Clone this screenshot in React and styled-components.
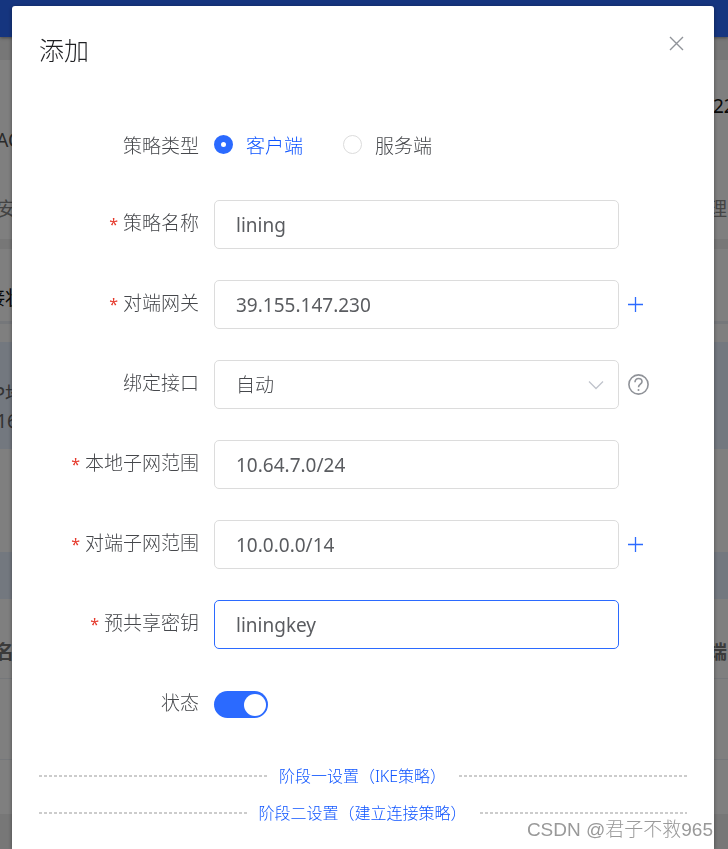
import React, { useState } from "react";
import styled, { createGlobalStyle } from "styled-components";

const phases = ["阶段一设置（IKE策略）", "阶段二设置（建立连接策略）"];

const App = () => {
  const [type, setType] = useState("client");
  const [active, setActive] = useState("psk");
  const [enabled, setEnabled] = useState(true);
  const [values, setValues] = useState({
    name: "lining",
    gateway: "39.155.147.230",
    iface: "auto",
    local: "10.64.7.0/24",
    remote: "10.0.0.0/14",
    psk: "liningkey",
  });

  const textRow = (id, label, canAdd) => (
    <Row>
      <Label htmlFor={id} $required>{label}</Label>
      <TextInput
        id={id}
        type="text"
        value={values[id]}
        $active={active === id}
        onFocus={() => setActive(id)}
        onChange={(e) => setValues({ ...values, [id]: e.target.value })}
      />
      {canAdd && (
        <IconButton type="button" aria-label={"添加" + label}>
          <svg width="15" height="15" viewBox="0 0 15 15">
            <path d="M7.5 0v15M0 7.5h15" stroke="#2b6aff" strokeWidth="1.3" />
          </svg>
        </IconButton>
      )}
    </Row>
  );

  return (
    <>
      <GlobalStyle />
      <Page>
        <TopBar />
        <Summary>
          <PageRow $height={62} $top={30} $color="#111">
            <Left />
            <Right $width={15}>22</Right>
          </PageRow>
          <PageRow $height={36} $color="#555">
            <Left $width={20}>AC</Left>
          </PageRow>
          <PageRow $height={81} $top={19} $color="#888">
            <Left $width={16}>安</Left>
            <Right>理</Right>
          </PageRow>
        </Summary>
        <Panel>
          <PageRow $height={75} $top={24} $color="#111" $line={3}>
            <Left $width={24}>接状</Left>
          </PageRow>
          <Notice>
            <Left $width={24}>P地</Left>
            <Left $width={18}>16</Left>
          </Notice>
          <Toolbar />
          <PageRow $height={80} $top={24} $color="#777" $bold $line={1}>
            <Left $width={14}>名</Left>
            <Right>端</Right>
          </PageRow>
          <PageRow $height={81} $line={1} />
          <PageRow $height={54} />
        </Panel>
      </Page>

      <Overlay>
        <Dialog role="dialog" aria-labelledby="dialog-title">
          <Header>
            <Title id="dialog-title">添加</Title>
            <CloseButton type="button" aria-label="关闭">
              <svg width="15" height="15" viewBox="0 0 15 15">
                <path d="M1 1l13 13M14 1L1 14" stroke="#909399" strokeWidth="1.4" />
              </svg>
            </CloseButton>
          </Header>

          <Form onSubmit={(e) => e.preventDefault()}>
            <Row>
              <RowTitle id="type-label">策略类型</RowTitle>
              <RadioGroup role="radiogroup" aria-labelledby="type-label">
                <RadioLabel $checked={type === "client"}>
                  <Radio name="type" checked={type === "client"} onChange={() => setType("client")} />
                  客户端
                </RadioLabel>
                <RadioLabel $checked={type === "server"}>
                  <Radio name="type" checked={type === "server"} onChange={() => setType("server")} />
                  服务端
                </RadioLabel>
              </RadioGroup>
            </Row>
            {textRow("name", "策略名称")}
            {textRow("gateway", "对端网关", true)}
            <Row>
              <Label htmlFor="iface">绑定接口</Label>
              <SelectBox>
                <Select
                  id="iface"
                  value={values.iface}
                  onChange={(e) => setValues({ ...values, iface: e.target.value })}
                >
                  <option value="auto">自动</option>
                </Select>
                <svg width="16" height="10" viewBox="0 0 16 10">
                  <path d="M1 1.5l7 7 7-7" fill="none" stroke="#c0c4cc" strokeWidth="1.3" />
                </svg>
              </SelectBox>
              <IconButton type="button" aria-label="帮助">
                <svg width="21" height="21" viewBox="0 0 21 21" fill="none" stroke="#909399" strokeWidth="1.6">
                  <circle cx="10.5" cy="10.5" r="9.6" />
                  <path d="M7 8.2C7 5.9 8.5 4.5 10.5 4.5s3.5 1.3 3.5 3.2c0 2.3-3.5 2.8-3.5 5.6" />
                  <circle cx="10.5" cy="16" r="1" fill="#909399" stroke="none" />
                </svg>
              </IconButton>
            </Row>
            {textRow("local", "本地子网范围")}
            {textRow("remote", "对端子网范围", true)}
            {textRow("psk", "预共享密钥")}
            <Row>
              <Label htmlFor="enabled">状态</Label>
              <Switch id="enabled" checked={enabled} onChange={(e) => setEnabled(e.target.checked)} />
            </Row>
          </Form>

          {phases.map((phase) => (
            <Divider key={phase}>
              <DividerButton type="button">{phase}</DividerButton>
            </Divider>
          ))}
        </Dialog>
      </Overlay>
      <Watermark>CSDN @君子不救965</Watermark>
    </>
  );
};

const GlobalStyle = createGlobalStyle`
  * {
    box-sizing: border-box;
  }

  body {
    margin: 0;
    font-family: "Noto Sans", "Noto Sans CJK SC", sans-serif;
    font-size: 19px;
    font-weight: 300;
    color: #46484c;
  }

  button, input, select {
    font: inherit;
    margin: 0;
  }
`;

/* Page behind the dialog */
const Page = styled.div`
  height: 100vh;
  overflow: hidden;
  background: #eee;
  font-weight: 400;
`;

const TopBar = styled.header`
  height: 37px;
  background: #2b6aff;
  box-shadow: 0 1px 3px rgba(0, 0, 0, 0.4);
`;

const Summary = styled.section`
  margin-top: 23px;
  background: #fff;
`;

const Panel = styled.section`
  margin-top: 10px;
  background: #fff;
`;

const PageRow = styled.div`
  display: flex;
  justify-content: space-between;
  align-items: center;
  height: ${({ $height }) => $height}px;
  padding-top: ${({ $top = 0 }) => $top}px;
  color: ${({ $color }) => $color};
  font-weight: ${({ $bold }) => ($bold ? 700 : "inherit")};
  border-bottom: ${({ $line = 0 }) => $line}px solid #ebeef5;
`;

const Left = styled.div`
  display: flex;
  justify-content: flex-end;
  width: ${({ $width = 20 }) => $width}px;
  white-space: nowrap;
`;

const Right = styled.div`
  width: ${({ $width = 20 }) => $width}px;
  white-space: nowrap;
`;

const Notice = styled.div`
  margin-top: 18px;
  padding-top: 39px;
  height: 107px;
  background: #e6f0ff;
  line-height: 27px;
  color: #666;
`;

const Toolbar = styled.div`
  margin-top: 103px;
  height: 47px;
  background: #e6f0ff;
`;

/* Dialog */
const Overlay = styled.div`
  position: fixed;
  inset: 0;
  display: flex;
  flex-direction: column;
  padding: 6px 14px 0 12px;
  background: rgba(0, 0, 0, 0.5);
  overflow: auto;
`;

const Dialog = styled.div`
  flex: 1 0 auto;
  padding: 27px 27px 18px;
  background: #fff;
  border-radius: 3px 3px 0 0;
  box-shadow: 0 1px 4px rgba(0, 0, 0, 0.4);
`;

const Header = styled.div`
  display: flex;
  justify-content: space-between;
  align-items: flex-start;
  height: 87px;
`;

const Title = styled.h2`
  margin: 0;
  font-size: 25px;
  font-weight: 300;
  line-height: 34px;
  color: #1f2023;
`;

const CloseButton = styled.button`
  display: flex;
  padding: 3px;
  border: 0;
  background: none;
  cursor: pointer;
`;

const Form = styled.form`
  display: flex;
  flex-direction: column;
  gap: 31px;
`;

const Row = styled.div`
  display: grid;
  grid-template-columns: 160px minmax(0, 1fr) 68px;
  align-items: center;
  height: 49px;
`;

const RowTitle = styled.span`
  text-align: right;
  white-space: nowrap;
`;

const Label = styled.label`
  align-self: start;
  line-height: 47px;
  text-align: right;
  white-space: nowrap;

  &::before {
    content: ${({ $required }) => ($required ? '"*"' : "none")};
    margin-right: 5px;
    color: #e5392b;
    font-size: 16px;
    font-weight: 400;
  }
`;

const TextInput = styled.input`
  height: 49px;
  min-width: 0;
  margin-left: 15px;
  padding: 0 21px;
  border: 1px solid ${({ $active }) => ($active ? "#2b6aff" : "#dcdcdc")};
  border-radius: 5px;
  outline: none;
  background: #fff;
  color: #5a5c60;
  font-weight: 400;
`;

const SelectBox = styled.div`
  position: relative;
  margin-left: 15px;

  svg {
    position: absolute;
    top: 20px;
    right: 15px;
    pointer-events: none;
  }
`;

const Select = styled.select`
  appearance: none;
  display: block;
  width: 100%;
  height: 49px;
  padding: 0 21px;
  border: 1px solid #dcdcdc;
  border-radius: 5px;
  outline: none;
  background: #fff;
  color: #46484c;
`;

const IconButton = styled.button`
  display: flex;
  justify-self: start;
  margin-left: 9px;
  padding: 0;
  border: 0;
  background: none;
  cursor: pointer;
`;

const RadioGroup = styled.div`
  display: flex;
  gap: 40px;
  margin-left: 15px;
`;

const RadioLabel = styled.label`
  display: flex;
  align-items: center;
  gap: 13px;
  color: ${({ $checked }) => ($checked ? "#0f55ff" : "#46484c")};
  cursor: pointer;
`;

const Radio = styled.input.attrs({ type: "radio" })`
  appearance: none;
  width: 19px;
  height: 19px;
  border: 1px solid #dcdcdc;
  border-radius: 50%;
  background: #fff;

  &:checked {
    border: 7px solid #2b6aff;
  }
`;

const Switch = styled.input.attrs({ type: "checkbox", role: "switch" })`
  appearance: none;
  display: flex;
  justify-content: ${({ checked }) => (checked ? "flex-end" : "flex-start")};
  align-items: center;
  width: 54px;
  height: 27px;
  margin-left: 15px;
  padding: 2px;
  border-radius: 14px;
  background: ${({ checked }) => (checked ? "#2b6aff" : "#dcdfe6")};
  cursor: pointer;

  &::before {
    content: "";
    width: 22px;
    height: 22px;
    border-radius: 50%;
    background: #fff;
  }
`;

const Divider = styled.div`
  display: flex;
  align-items: center;
  height: 37px;

  form + & {
    margin-top: 28px;
  }

  &::before,
  &::after {
    content: "";
    flex: 1;
    height: 2px;
    background: repeating-linear-gradient(to right, #ccc 0 3px, transparent 3px 5px);
  }
`;

const DividerButton = styled.button`
  padding: 0 13px 2px 12px;
  border: 0;
  background: none;
  color: #0f55ff;
  font-size: 16px;
  font-weight: 300;
  cursor: pointer;
`;

const Watermark = styled.div`
  position: fixed;
  right: 15px;
  bottom: 5px;
  font-family: "Liberation Sans", "Noto Sans CJK SC", sans-serif;
  line-height: 28px;
  color: #999;
  text-shadow: 1px 1px 1px rgba(255, 255, 255, 0.8);
`;

export default App;
